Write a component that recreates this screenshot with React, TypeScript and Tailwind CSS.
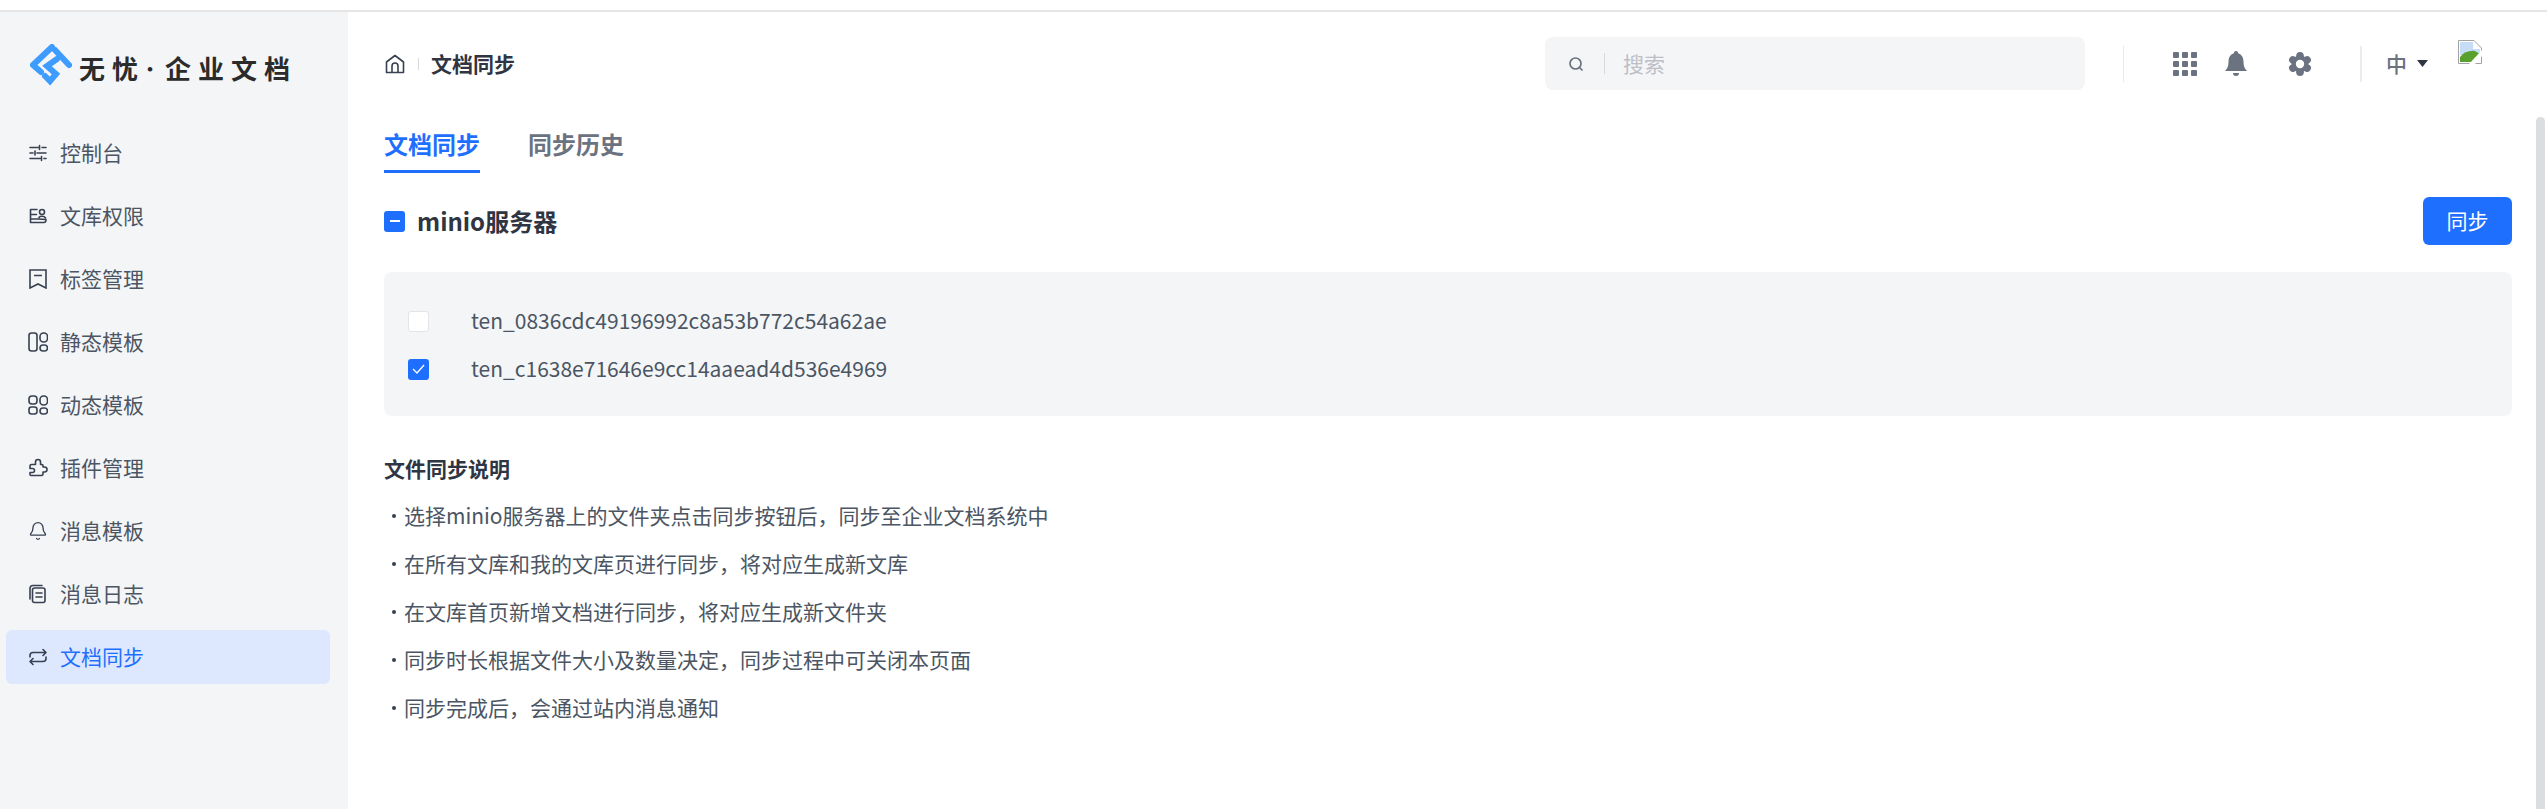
import { Bell } from "lucide-react";

const navItems = [
  { label: "控制台", icon: "sliders" },
  { label: "文库权限", icon: "perm" },
  { label: "标签管理", icon: "tag" },
  { label: "静态模板", icon: "static" },
  { label: "动态模板", icon: "dynamic" },
  { label: "插件管理", icon: "plugin" },
  { label: "消息模板", icon: "bell" },
  { label: "消息日志", icon: "log" },
  { label: "文档同步", icon: "sync" },
];

const notes = [
  "选择minio服务器上的文件夹点击同步按钮后，同步至企业文档系统中",
  "在所有文库和我的文库页进行同步，将对应生成新文库",
  "在文库首页新增文档进行同步，将对应生成新文件夹",
  "同步时长根据文件大小及数量决定，同步过程中可关闭本页面",
  "同步完成后，会通过站内消息通知",
];

function NavIcon({ name }: { name: string }) {
  const common = {
    width: 20,
    height: 20,
    viewBox: "0 0 20 20",
    fill: "none",
    stroke: "#374151",
    strokeWidth: 1.6,
    strokeLinecap: "round" as const,
    strokeLinejoin: "round" as const,
  };
  switch (name) {
    case "sliders":
      return (
        <svg {...common}>
          <path d="M2 4.500h8M14 4.500h4M2 10h3M9 10h9M2 15.500h10M16 15.500h2M11.500 2.500v4M7 8v4M13.500 13.500v4" />
        </svg>
      );
    case "perm":
      return (
        <svg {...common}>
          <path d="M9 3.500H2.500v13H16c1.500 0 2-1 2-3l-8-.5H2.500M2.500 8.500h6" />
          <circle cx="14" cy="6" r="2.500" />
          <path d="M11 12c0-2 5-2.500 6.500 0" />
        </svg>
      );
    case "tag":
      return (
        <svg {...common} strokeLinecap="butt" strokeLinejoin="miter">
          <path d="M2 1h16v18l-8-4-8 4zM6 6.500h8" />
        </svg>
      );
    case "static":
      return (
        <svg {...common}>
          <rect x="1" y="1" width="8" height="18" rx="2.500" />
          <rect x="12" y="1" width="7.500" height="9" rx="3.500" />
          <rect x="12" y="13" width="7.500" height="6" rx="3" />
        </svg>
      );
    case "dynamic":
      return (
        <svg {...common}>
          <rect x="1" y="1" width="8" height="8" rx="3" />
          <rect x="12" y="1" width="7.500" height="9" rx="3.500" />
          <rect x="1" y="12" width="8" height="7" rx="2.500" />
          <rect x="12" y="13" width="7.500" height="6" rx="3" />
        </svg>
      );
    case "plugin":
      return (
        <svg {...common}>
          <path d="M7.500 6.500h-4a1.500 1.500 0 0 0-1.500 1.500v2.500h2.500a2 2 0 0 1 0 4H2v2a1 1 0 0 0 1 1h10.500a1.500 1.500 0 0 0 1.500-1.500V14h1.500a2.500 2.500 0 0 0 0-5H15V7.500a1 1 0 0 0-1-1h-1.500V4a2.500 2.500 0 0 0-5 0z" />
        </svg>
      );
    case "bell":
      return <Bell size={20} color="#374151" strokeWidth={1.6} />;
    case "log":
      return (
        <svg {...common}>
          <path d="M14 1.500H5a3 3 0 0 0-3 3V15" />
          <rect x="4.500" y="4" width="12.500" height="14.500" rx="2" />
          <path d="M8 9h6M8 13h6" />
        </svg>
      );
    default:
      return (
        <svg {...common}>
          <path d="M2 10V8.500a3 3 0 0 1 3-3h12.500M15 2.500l3 3-3 3M18 10v1.500a3 3 0 0 1-3 3H2.500M5 11.500l-3 3 3 3" />
        </svg>
      );
  }
}

function Logo() {
  return (
    <svg width="42" height="42" viewBox="0 0 42 42" fill="none" stroke="#3f9cff" strokeWidth="6" strokeLinejoin="miter" strokeLinecap="round">
      <path d="M3 21L22 3M25 6l14 15M3 21l8 7" />
      <path d="M27 15L17 22l9 8-6 7-5-5" />
    </svg>
  );
}

function BrokenImage() {
  return (
    <svg width="24" height="24" viewBox="0 0 24 24">
      <path d="M0.500 0.500H16l7.500 7.500v15.500H0.500z" fill="#fff" stroke="#a3a3a3" />
      <path d="M2 2h13v7h7v6L2 15z" fill="#c7dcf7" />
      <path d="M2 22v-5c4-5 10-7 15-6l5 3-6 8z" fill="#5aa02c" />
      <path d="M24 10L11 24h6l7-8z" fill="#fff" />
    </svg>
  );
}

function Gear() {
  const lobes = [0, 60, 120, 180, 240, 300];
  return (
    <svg className="ml-[41px]" width="24" height="24" viewBox="0 0 24 24" fill="#6b7280">
      {lobes.map((deg) => (
        <circle key={deg} cx="12" cy="3.800" r="3.800" transform={`rotate(${deg} 12 12)`} />
      ))}
      <circle cx="12" cy="12" r="8.500" />
      <circle cx="12" cy="12" r="4.200" fill="#fff" />
    </svg>
  );
}

export default function App() {
  return (
    <div className="relative flex h-screen flex-col overflow-hidden bg-white font-['Noto_Sans_CJK_SC','Noto_Sans',sans-serif] text-[21px] text-[#374151]">
      <div className="h-[12px] shrink-0 border-b-2 border-[#e5e5e5]" />
      <div className="flex min-h-0 flex-1">
        {/* Sidebar */}
        <aside className="w-[348px] shrink-0 bg-[#f4f5f7]">
          <div className="flex h-[84px] items-center pt-[22px] pl-[30px]">
            <Logo />
            <span className="ml-[7px] flex items-center pt-[6px] text-[26px] leading-none font-bold whitespace-nowrap text-[#2b2b2b]">
              <span className="mr-[7px]">无</span>
              <span>忧</span>
              <span className="mr-[6px] ml-[3px] text-[18px]">·</span>
              <span className="tracking-[7px]">企业文档</span>
            </span>
          </div>
          <nav className="mt-[30px] flex flex-col gap-[9px] px-[6px]">
            {navItems.map((item) => (
              <div
                key={item.label}
                className={`flex h-[54px] w-[324px] items-center gap-[12px] rounded-[6px] pl-[22px] ${
                  item.label === "文档同步" ? "bg-[#dde8fe] text-[#1f6fff]" : "text-[#4b5563]"
                }`}
              >
                <NavIcon name={item.icon} />
                <span>{item.label}</span>
              </div>
            ))}
          </nav>
        </aside>

        {/* Main */}
        <main className="min-w-0 flex-1">
          <header className="flex h-[104px] items-center pb-[1px]">
            <div className="flex items-center pl-[37px]">
              <svg width="20" height="20" viewBox="0 0 20 20" fill="none" stroke="#374151" strokeWidth="1.6" strokeLinejoin="round" strokeLinecap="round">
                <path d="M1.500 8L10 1.500 18.500 8v10.500h-17zM7 18v-6a3 3 0 0 1 6 0v6" />
              </svg>
              <div className="mx-[13px] h-[12px] w-px bg-[#d9d9d9]" />
              <span className="-ml-px font-semibold text-[#2f3542]">文档同步</span>
            </div>
            <div className="ml-[1030px] flex h-[53px] w-[540px] items-center rounded-[8px] bg-[#f4f5f7] pl-[23px]">
              <svg width="16" height="16" viewBox="0 0 16 16" fill="none" stroke="#6b7280" strokeWidth="1.700">
                <circle cx="7.500" cy="7.500" r="5.500" />
                <path d="M11.500 11.500l3 3" />
              </svg>
              <div className="mr-[18px] ml-[20px] h-[21px] w-px bg-[#d9d9dd]" />
              <span className="text-[#bcbfc5]">搜索</span>
            </div>
            <div className="ml-[38px] h-[36px] w-px bg-[#e9e9e9]" />
            <div className="ml-[49px] grid grid-cols-3 gap-[3px]">
              {Array.from({ length: 9 }).map((_, i) => (
                <div key={i} className="h-[6px] w-[6px] rounded-[1px] bg-[#6b7280]" />
              ))}
            </div>
            <svg className="ml-[28px]" width="22" height="26" viewBox="0 0 22 26" fill="#6b7280">
              <path d="M11 0a2 2 0 0 1 2 2.300C17 3.500 18.500 7 18.500 11c0 4 1 6 3.500 9H0c2.500-3 3.500-5 3.500-9 0-4 1.500-7.500 5.500-8.700A2 2 0 0 1 11 0zM8 22h6a3 3 0 0 1-6 0z" />
            </svg>
            <Gear />
            <div className="ml-[48px] h-[36px] w-[2px] bg-[#ececec]" />
            <span className="ml-[24px] font-medium text-[#6b7280]">中</span>
            <svg className="ml-[10px]" width="11" height="7" viewBox="0 0 11 7" fill="#2f3542">
              <path d="M0 0h11L5.500 7z" />
            </svg>
            <div className="mb-[24px] ml-[30px]">
              <BrokenImage />
            </div>
          </header>

          <div className="pr-[35px] pl-[36px]">
            {/* Tabs */}
            <div className="flex gap-[48px] text-[24px] font-semibold">
              <div className="h-[57px] border-b-[3px] border-[#1f6fff] pt-[10px] leading-[36px] text-[#1f6fff]">文档同步</div>
              <div className="h-[57px] pt-[10px] leading-[36px] text-[#6b7280]">同步历史</div>
            </div>

            {/* Server */}
            <div className="mt-[24px] flex items-center justify-between">
              <div className="flex items-center gap-[12px]">
                <div className="flex h-[21px] w-[21px] items-center justify-center rounded-[3px] bg-[#1f6fff]">
                  <div className="h-[2px] w-[10px] bg-white" />
                </div>
                <span className="text-[24px] font-bold text-[#2f3542]">minio服务器</span>
              </div>
              <button className="flex h-[48px] w-[89px] items-center justify-center rounded-[6px] bg-[#1f6fff] text-white">同步</button>
            </div>

            <div className="mt-[27px] h-[144px] rounded-[8px] bg-[#f4f5f7] pt-[25px] pl-[24px]">
              <div className="flex h-[48px] items-center gap-[42px]">
                <div className="h-[21px] w-[21px] rounded-[3px] border border-[#e3e4e8] bg-white" />
                <span className="text-[#4b5563]">ten_0836cdc49196992c8a53b772c54a62ae</span>
              </div>
              <div className="flex h-[48px] items-center gap-[42px]">
                <div className="flex h-[21px] w-[21px] items-center justify-center rounded-[3px] bg-[#1f6fff]">
                  <svg width="13" height="10" viewBox="0 0 13 10" fill="none" stroke="#fff" strokeWidth="1.300">
                    <path d="M1 5l4 4 7-8" />
                  </svg>
                </div>
                <span className="text-[#4b5563]">ten_c1638e71646e9cc14aaead4d536e4969</span>
              </div>
            </div>

            {/* Notes */}
            <div className="mt-[28px] h-[48px] leading-[48px] font-bold text-[#2f3542]">文件同步说明</div>
            <div>
              {notes.map((note) => (
                <div key={note} className="flex h-[48px] items-center gap-[8px] pl-[8px]">
                  <div className="h-[4px] w-[4px] rounded-full bg-[#374151]" />
                  <span className="text-[#4b5563]">{note}</span>
                </div>
              ))}
            </div>
          </div>
        </main>
      </div>
      {/* scrollbar */}
      <div className="absolute top-[117px] right-[2px] bottom-0 w-[9px] rounded-t-full bg-[#dcdddf]" />
    </div>
  );
}
